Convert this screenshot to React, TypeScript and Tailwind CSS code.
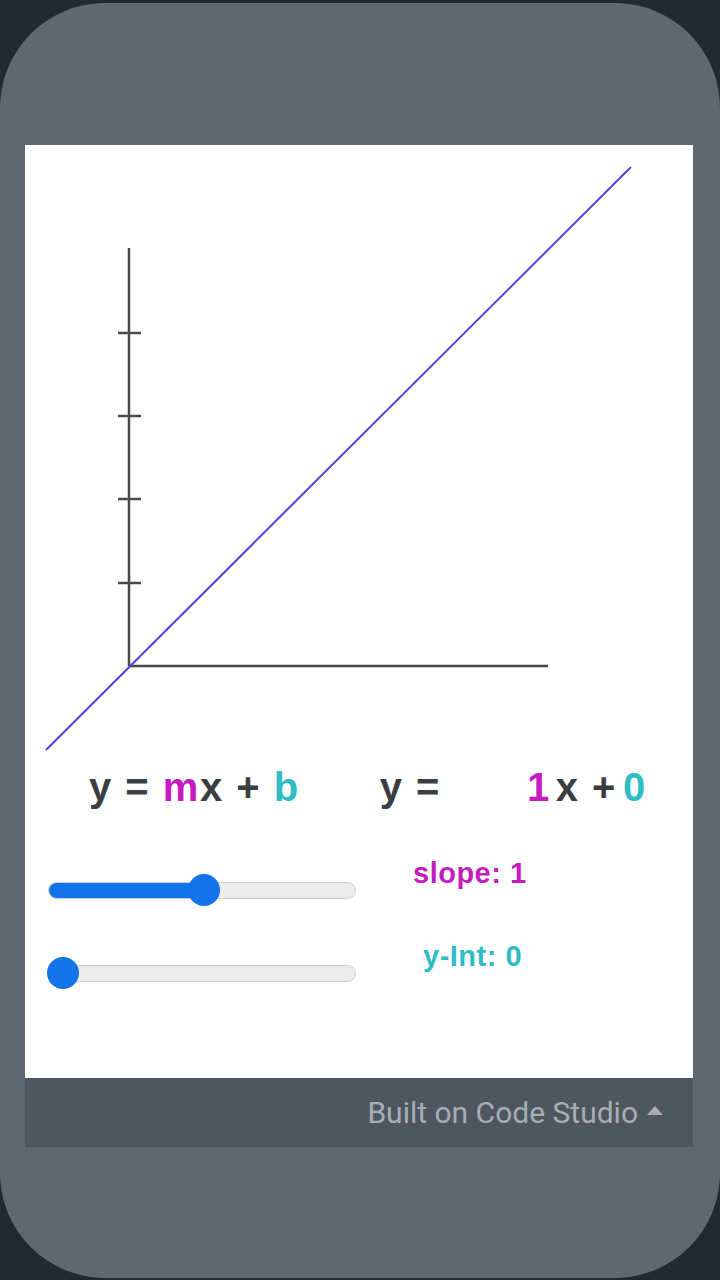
import React from "react";

function Slider({ pct, thumb }: { pct: number; thumb: number }) {
  return (
    <div className="relative w-[308px] h-[34px] flex items-center">
      <div className="w-full h-[17px] rounded-full bg-[#ececec] border border-[#cfcfcf] overflow-hidden">
        <div className="h-full bg-[#1273eb]" style={{ width: `${pct}px` }} />
      </div>
      <div
        className="absolute top-[1px] w-[32px] h-[32px] rounded-full bg-[#1273eb]"
        style={{ left: `${thumb - 16}px` }}
      />
    </div>
  );
}

export default function App() {
  const font = { fontFamily: '"Liberation Sans", Arial, sans-serif' };
  return (
    <div className="w-[720px] h-[1280px] bg-[#1f2a33] pt-[3px] overflow-hidden">
      <div className="h-[1275px] rounded-[105px] bg-[#5d6870] pt-[142px] pl-[25px] pr-[27px]">
        <div className="bg-white h-[933px] flex flex-col" style={font}>
          {/* graph */}
          <svg width="668" height="612" viewBox="0 0 668 612" className="block">
            <line x1="104" y1="103" x2="104" y2="521" stroke="#4a4a4a" strokeWidth="2.5" />
            <line x1="104" y1="521" x2="523" y2="521" stroke="#4a4a4a" strokeWidth="2.5" />
            {[188, 271, 354, 438].map((y) => (
              <line key={y} x1="93" y1={y} x2="116" y2={y} stroke="#4a4a4a" strokeWidth="2.5" />
            ))}
            <line x1="21" y1="605" x2="606" y2="22" stroke="#5b3fd8" strokeWidth="2" />
          </svg>

          {/* equations */}
          <div className="h-[60px] flex items-center font-bold text-[40px] text-[#3a3d42] tracking-[1.5px]">
            <span className="ml-[64px]">
              y = <span className="text-[#c41cc0]">m</span>x + <span className="text-[#2fbcc4]">b</span>
            </span>
            <span className="ml-[80px]">y =</span>
            <span className="ml-[86px] text-[#c41cc0]">1</span>
            <span className="ml-[5px]">x +</span>
            <span className="ml-[6px] text-[#2fbcc4]">0</span>
          </div>

          {/* sliders */}
          <div className="mt-[35px] flex">
            <div className="ml-[23px] flex flex-col gap-[49px] pt-[21px]">
              <Slider pct={160} thumb={156} />
              <Slider pct={0} thumb={15} />
            </div>
            <div className="flex flex-col font-bold text-[29px] tracking-[0.5px]">
              <span className="ml-[57px] text-[#c41cc0]">slope: 1</span>
              <span className="ml-[67px] mt-[39px] text-[#2fbcc4]">y-Int: 0</span>
            </div>
          </div>
        </div>
        <div
          className="h-[69px] bg-[#4e575f] flex items-center justify-end pr-[29px] text-[#a6aeb4] text-[30px]"
          style={{ fontFamily: 'Roboto, "Open Sans", sans-serif' }}
        >
          <span>Built on Code Studio</span>
          <svg width="18" height="12" viewBox="0 0 18 12" className="ml-[8px] mb-[6px]">
            <path d="M1 11 L9 2 L17 11 Z" fill="#a6aeb4" />
          </svg>
        </div>
      </div>
    </div>
  );
}
